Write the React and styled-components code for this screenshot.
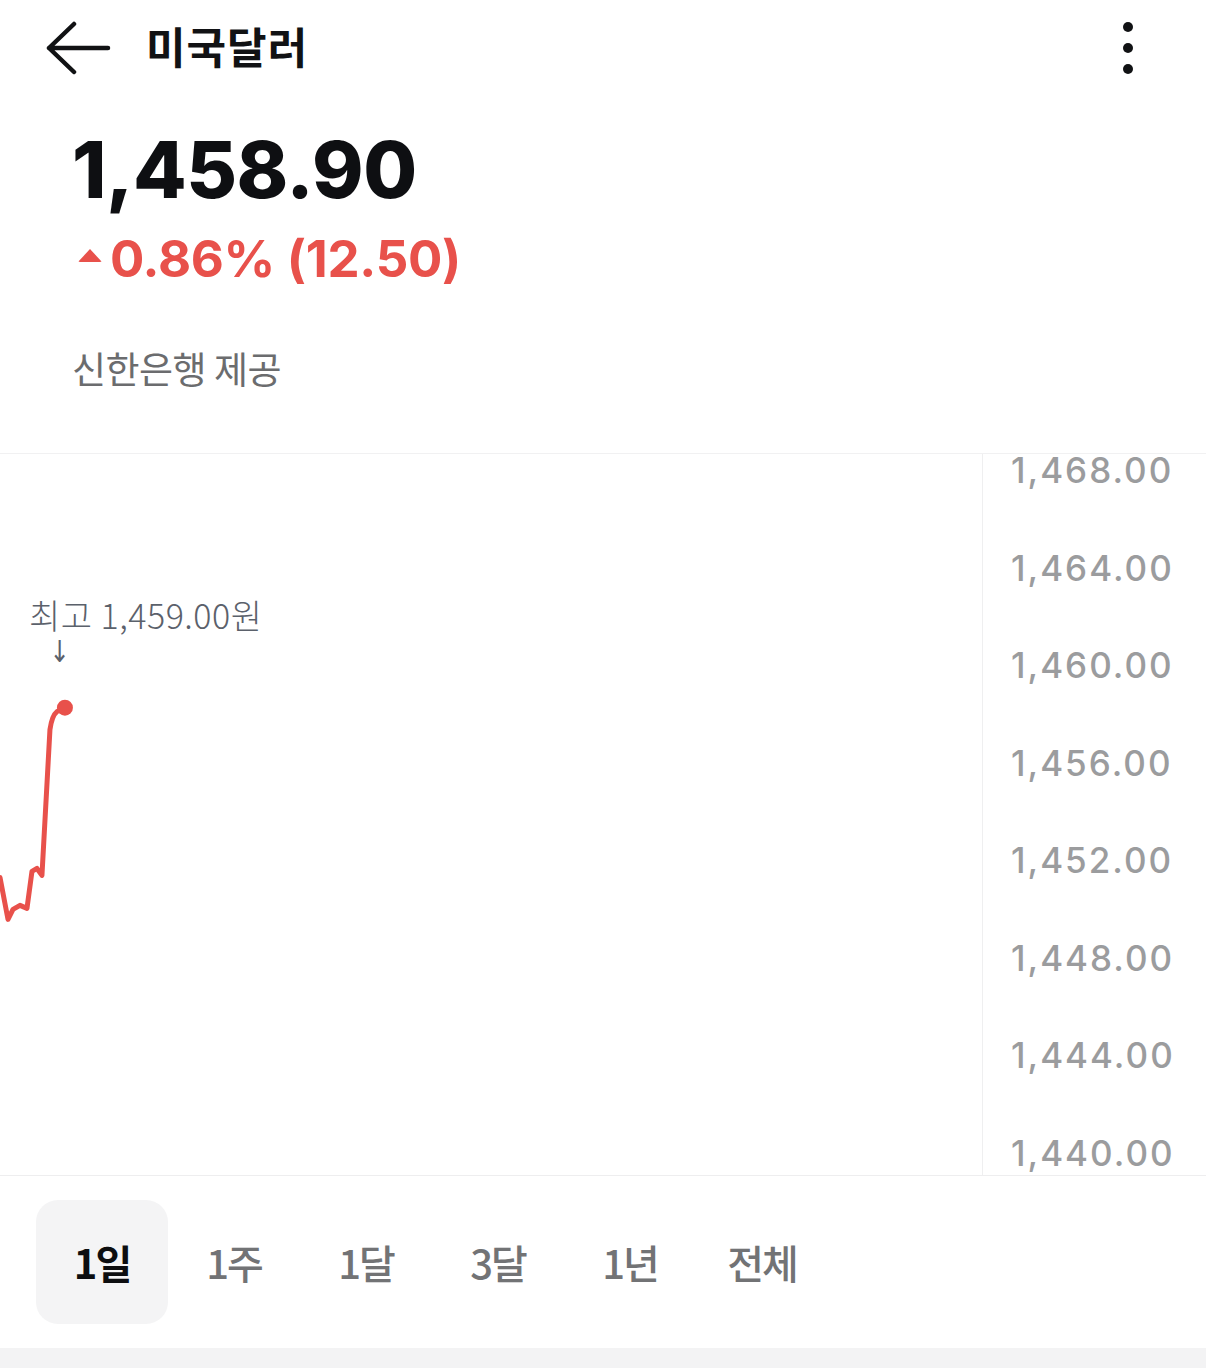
import React from "react";
import styled, { createGlobalStyle } from "styled-components";

const Global = createGlobalStyle`
  html, body { margin: 0; padding: 0; background: #fff; }
  body { font-family: "Noto Sans CJK KR", "Noto Sans", sans-serif; }
  * { box-sizing: border-box; }
`;

const Page = styled.div`
  width: 1206px;
  height: 1368px;
  display: flex;
  flex-direction: column;
  background: #fff;
  overflow: hidden;
`;

const Header = styled.header`
  height: 95px;
  display: flex;
  align-items: center;
  padding: 0 68px 0 46px;
`;

const IconButton = styled.button`
  border: 0;
  background: none;
  padding: 0;
  display: flex;
  align-items: center;
  justify-content: center;
  cursor: pointer;
`;

const Title = styled.h1`
  margin: -4px 0 0 34px;
  flex: 1;
  font-family: "Noto Sans CJK KR", sans-serif;
  font-weight: 700;
  font-size: 43px;
  line-height: 1;
  color: #111214;
  letter-spacing: 1px;
`;

const Summary = styled.section`
  display: flex;
  flex-direction: column;
  padding: 29px 0 0 72px;
  height: 358px;
`;

const Price = styled.div`
  font-family: Inter, "Noto Sans", sans-serif;
  font-weight: 800;
  font-size: 78px;
  line-height: 92px;
  color: #0e0f12;
  letter-spacing: -0.5px;
`;

const Change = styled.div`
  display: flex;
  align-items: center;
  margin-top: 13px;
  margin-left: 6px;
  font-family: Inter, "Noto Sans", sans-serif;
  font-weight: 700;
  font-size: 51px;
  line-height: 60px;
  color: ${(p) => p.$color};
  letter-spacing: -0.3px;
`;

const Caret = styled.span`
  width: 0;
  height: 0;
  border-left: 12px solid transparent;
  border-right: 12px solid transparent;
  border-bottom: 13px solid ${(p) => p.$color};
  border-radius: 2px;
  margin-right: 8px;
  margin-top: -8px;
`;

const Provider = styled.div`
  margin-top: 57px;
  font-size: 37px;
  line-height: 44px;
  font-weight: 400;
  color: #6b6c6e;
  letter-spacing: -0.5px;
`;

const ChartArea = styled.section`
  display: grid;
  grid-template-columns: 983px 1fr;
  height: 723px;
  border-top: 1px solid #f1f1f2;
  border-bottom: 1px solid #eeeeef;
`;

const Plot = styled.div`
  position: relative;
  border-right: 1px solid #efeff0;
  overflow: hidden;
`;

const PlotSvg = styled.svg`
  display: block;
  width: 100%;
  height: 100%;
`;

const Annotation = styled.div`
  position: absolute;
  left: 29px;
  top: 143px;
  display: flex;
  flex-direction: column;
  align-items: flex-start;
  font-size: 34px;
  line-height: 36px;
  font-weight: 300;
  color: #5b616b;
  white-space: nowrap;
  letter-spacing: 0.5px;
`;

const AnnotationArrow = styled.span`
  margin: 6px 0 0 18px;
  font-family: "DejaVu Sans", sans-serif;
  font-size: 30px;
  line-height: 26px;
  font-weight: 400;
  transform: scaleX(0.8);
`;

const Axis = styled.div`
  display: flex;
  flex-direction: column;
  justify-content: space-between;
  padding: 0 0 6px 28px;
`;

const AxisLabel = styled.span`
  font-family: Inter, "Noto Sans", sans-serif;
  font-weight: 500;
  font-size: 35px;
  line-height: 32px;
  color: #9b9c9e;
  letter-spacing: 2px;
`;

const Tabs = styled.nav`
  display: flex;
  align-items: center;
  padding: 0 36px;
  height: 172px;
`;

const Tab = styled.button`
  width: 132px;
  height: 124px;
  border: 0;
  border-radius: 22px;
  background: ${(p) => (p.$active ? "#f4f4f5" : "transparent")};
  font-family: "Noto Sans CJK KR", sans-serif;
  font-size: 40px;
  font-weight: ${(p) => (p.$active ? 700 : 500)};
  color: ${(p) => (p.$active ? "#0d0e10" : "#727375")};
  letter-spacing: -2px;
  padding: 0;
  cursor: pointer;
`;

const BottomStrip = styled.div`
  flex: 1;
  background: #f3f3f4;
`;

const RED = "#e8514b";

const BackIcon = () => (
  <svg width="66" height="56" viewBox="0 0 66 56" fill="none">
    <path
      d="M28 4 L3 28 L28 52 M3 28 H62"
      stroke="#111214"
      strokeWidth="4.5"
      strokeLinecap="round"
      strokeLinejoin="round"
    />
  </svg>
);

const MoreIcon = () => (
  <svg width="20" height="60" viewBox="0 0 20 60" fill="#111214">
    <circle cx="10" cy="9" r="5" />
    <circle cx="10" cy="30" r="5" />
    <circle cx="10" cy="51" r="5" />
  </svg>
);

const axisValues = [
  "1,468.00",
  "1,464.00",
  "1,460.00",
  "1,456.00",
  "1,452.00",
  "1,448.00",
  "1,444.00",
  "1,440.00",
];

const periods = ["1일", "1주", "1달", "3달", "1년", "전체"];

export default function App() {
  return (
    <Page>
      <Global />
      <Header>
        <IconButton aria-label="뒤로">
          <BackIcon />
        </IconButton>
        <Title>미국달러</Title>
        <IconButton aria-label="더보기">
          <MoreIcon />
        </IconButton>
      </Header>

      <Summary>
        <Price>1,458.90</Price>
        <Change $color={RED}>
          <Caret $color={RED} />
          0.86% (12.50)
        </Change>
        <Provider>신한은행 제공</Provider>
      </Summary>

      <ChartArea>
        <Plot>
          <PlotSvg viewBox="0 0 983 722" preserveAspectRatio="none">
            <path
              d="M0 424 L8 466 L13 456 L20 452 L27 455 L32 418 L37 415 L42 422 L50 276 Q52 262 57 258 L64 254"
              fill="none"
              stroke={RED}
              strokeWidth="5"
              strokeLinejoin="round"
              strokeLinecap="round"
            />
            <circle cx="65" cy="254" r="8" fill={RED} />
          </PlotSvg>
          <Annotation>
            <span>최고 1,459.00원</span>
            <AnnotationArrow>↓</AnnotationArrow>
          </Annotation>
        </Plot>
        <Axis>
          {axisValues.map((v) => (
            <AxisLabel key={v}>{v}</AxisLabel>
          ))}
        </Axis>
      </ChartArea>

      <Tabs>
        {periods.map((p, i) => (
          <Tab key={p} $active={i === 0}>
            {p}
          </Tab>
        ))}
      </Tabs>
      <BottomStrip />
    </Page>
  );
}
